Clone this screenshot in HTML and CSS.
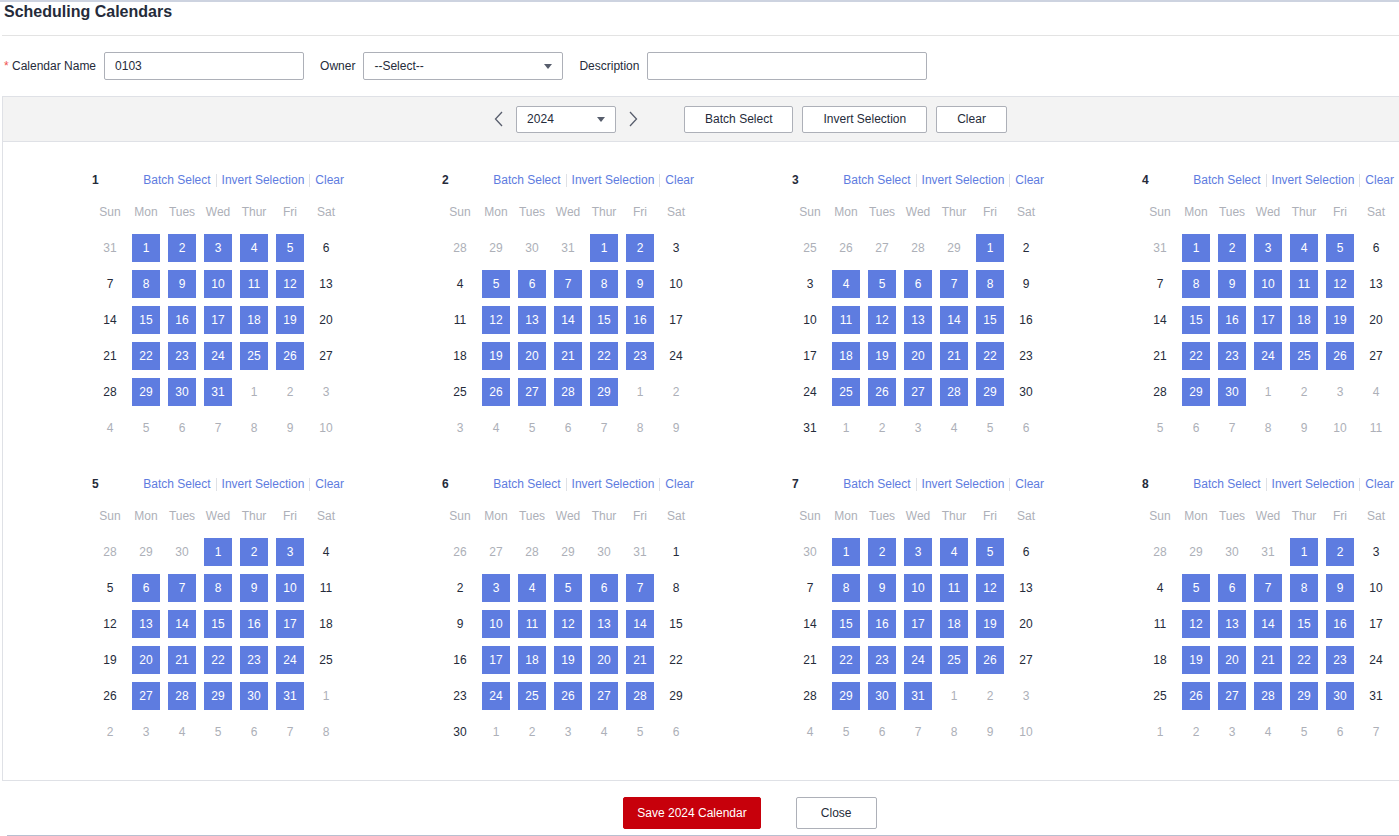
FILE: index.html
```html
<!DOCTYPE html>
<html lang="en">
<head>
  <meta charset="UTF-8">
  <title>Scheduling Calendars</title>
  <link rel="stylesheet" href="styles.css">
</head>
<body>
  <div class="page">
    <h2 class="title">Scheduling Calendars</h2>

    <div class="form-row">
      <label class="field-label"><span class="req">*</span> Calendar Name</label>
      <div class="input w200">0103</div>
      <label class="field-label">Owner</label>
      <div class="input select w200">--Select--<span class="caret"></span></div>
      <label class="field-label">Description</label>
      <div class="input w280"></div>
    </div>

    <div class="panel">
      <div class="toolbar">
        <svg class="chev" width="9" height="16" viewBox="0 0 9 16"><path d="M8 1 L1.5 8 L8 15" fill="none" stroke="#575d6c" stroke-width="1.3"/></svg>
        <div class="input select year">2024<span class="caret"></span></div>
        <svg class="chev" width="9" height="16" viewBox="0 0 9 16"><path d="M1 1 L7.5 8 L1 15" fill="none" stroke="#575d6c" stroke-width="1.3"/></svg>
        <div class="tool-btns">
          <button class="btn">Batch Select</button>
          <button class="btn">Invert Selection</button>
          <button class="btn">Clear</button>
        </div>
      </div>
      <div class="months" id="months"></div>
    </div>

    <div class="footer">
      <button class="btn btn-save">Save 2024 Calendar</button>
      <button class="btn btn-close">Close</button>
    </div>
  </div>
  <div class="bottom-line"></div>

  <script>
    const names = ['Sun', 'Mon', 'Tues', 'Wed', 'Thur', 'Fri', 'Sat'];
    const wrap = document.getElementById('months');

    for (let m = 0; m < 8; m++) {
      const first = new Date(2024, m, 1);
      const start = new Date(2024, m, 1 - first.getDay());
      let html = `<div class="month">
        <div class="month-head">
          <span class="month-no">${m + 1}</span>
          <span class="links"><a>Batch Select</a><i></i><a>Invert Selection</a><i></i><a>Clear</a></span>
        </div>
        <div class="days">`;
      names.forEach(n => { html += `<div class="wd">${n}</div>`; });
      for (let i = 0; i < 42; i++) {
        const d = new Date(start.getFullYear(), start.getMonth(), start.getDate() + i);
        const inMonth = d.getMonth() === m;
        const dow = d.getDay();
        if (!inMonth) {
          html += `<div class="day other">${d.getDate()}</div>`;
        } else if (dow > 0 && dow < 6) {
          html += `<div class="day"><span class="on">${d.getDate()}</span></div>`;
        } else {
          html += `<div class="day">${d.getDate()}</div>`;
        }
      }
      html += '</div></div>';
      wrap.innerHTML += html;
    }
  </script>
</body>
</html>
```

FILE: styles.css
```css
html, body {
  overflow: hidden;
}
body {
  margin: 0;
  font-family: "Liberation Sans", Arial, sans-serif;
  font-size: 12px;
  color: #252b3a;
  border-top: 2px solid #cdd3e0;
  height: 834px;
  position: relative;
}
.page {
  width: 1496px;
  margin-left: 2px;
}
.title {
  margin: 0;
  padding: 0 2px;
  height: 33px;
  font-size: 16px;
  line-height: 20px;
  font-weight: bold;
  border-bottom: 1px solid #e3e3e3;
}
.form-row {
  display: flex;
  align-items: center;
  margin: 16px 0 16px 2px;
  height: 28px;
}
.field-label {
  margin-right: 8px;
  color: #252b3a;
}
.req {
  color: #f0524f;
}
.input {
  box-sizing: border-box;
  height: 28px;
  border: 1px solid #adb0b8;
  border-radius: 2px;
  background: #fff;
  padding: 0 10px;
  line-height: 26px;
  margin-right: 16px;
  position: relative;
}
.w200 { width: 200px; }
.w280 { width: 280px; }
.caret {
  position: absolute;
  right: 10px;
  top: 11px;
  width: 0;
  height: 0;
  border-left: 4px solid transparent;
  border-right: 4px solid transparent;
  border-top: 5px solid #575d6c;
}
.panel {
  border: 1px solid #dfe1e6;
  border-right: none;
}
.toolbar {
  display: flex;
  align-items: center;
  justify-content: center;
  height: 44px;
  background: #f3f3f3;
  border-bottom: 1px solid #dfe1e6;
}
.chev {
  display: block;
}
.year {
  width: 100px;
  height: 27px;
  line-height: 25px;
  margin: 0 13px 0 13px;
}
.year .caret {
  top: 10px;
}
.tool-btns {
  display: flex;
  gap: 9px;
  margin-left: 46px;
}
.btn {
  font-family: inherit;
  font-size: 12px;
  color: #252b3a;
  background: #fff;
  border: 1px solid #adb0b8;
  border-radius: 2px;
  height: 27px;
  padding: 0 20px;
  cursor: pointer;
}
.months {
  display: grid;
  grid-template-columns: repeat(4, 252px);
  column-gap: 98px;
  row-gap: 26px;
  padding: 26px 0 30px 89px;
}
.month-head {
  display: flex;
  align-items: center;
  justify-content: space-between;
  height: 24px;
  margin-bottom: 2px;
}
.month-no {
  font-weight: bold;
}
.links {
  display: flex;
  align-items: center;
}
.links a {
  color: #5e7ce0;
  cursor: pointer;
}
.links i {
  display: inline-block;
  width: 1px;
  height: 13px;
  background: #dfe1e6;
  margin: 0 5px;
}
.days {
  display: grid;
  grid-template-columns: repeat(7, 36px);
  grid-auto-rows: 36px;
}
.wd, .day {
  display: flex;
  align-items: center;
  justify-content: center;
}
.wd {
  color: #adb0b8;
}
.day.other {
  color: #adb0b8;
}
.on {
  display: flex;
  align-items: center;
  justify-content: center;
  width: 28px;
  height: 28px;
  background: #5e7ce0;
  color: #fff;
}
.footer {
  display: flex;
  justify-content: center;
  gap: 35px;
  margin-top: 16px;
}
.btn-save {
  height: 32px;
  padding: 0 13px;
  background: #c7000b;
  border-color: #c7000b;
  color: #fff;
}
.btn-close {
  height: 32px;
  min-width: 81px;
}
.bottom-line {
  position: absolute;
  left: 7px;
  right: 0;
  bottom: 0;
  height: 1px;
  background: #b8bfd0;
}
```
